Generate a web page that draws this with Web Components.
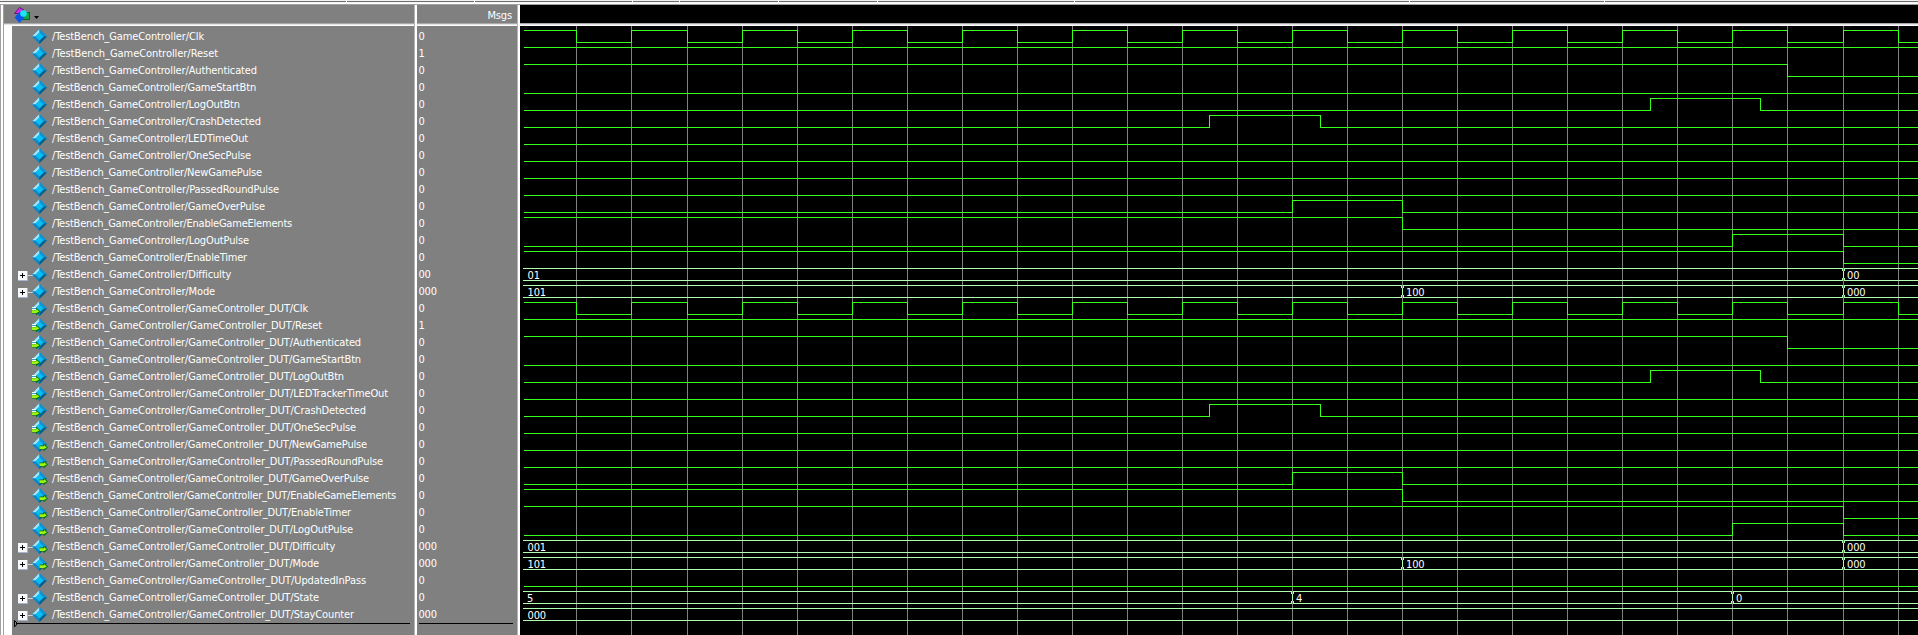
<!DOCTYPE html>
<html lang="en">
<head>
<meta charset="utf-8">
<title>Wave</title>
<style>
html,body{margin:0;height:100%;overflow:hidden;background:#fff}
</style>
</head>
<body>
<wave-window></wave-window>
<script>
const FONT = '"DejaVu Sans Condensed","DejaVu Sans",sans-serif';
const P = '/TestBench_GameController/', D = P + 'GameController_DUT/';
// Cursor ticks on the clock grid, in panel pixels.
const X0 = 520, G = k => Math.floor(576.92 + 55.048 * k);
const LO = [0], HI = [1];
const clk = [1]; for (let k = 0; k < 25; k++) clk.push([G(k), k % 2]);
const crash = [0, [1209, 1], [1320, 0]], logout = [0, [1650, 1], [1760, 0]];
const over = [0, [G(13), 1], [G(15), 0]], pulse = [0, [G(21), 1], [G(23), 0]];
const auth = [1, [G(22), 0]], elems = [1, [G(15), 0]], timer = [1, [G(23), 0]];
const mode = ['101', [G(15), '100'], [G(23), '000']];
// path, right edge of the label, value, icon kind, wave, bus
const rows = [
 [P+'Clk',204,'0','',clk],[P+'Reset',218,'1','',HI],[P+'Authenticated',257,'0','',auth],
 [P+'GameStartBtn',256,'0','',LO],[P+'LogOutBtn',240,'0','',logout],[P+'CrashDetected',261,'0','',crash],
 [P+'LEDTimeOut',248,'0','',LO],[P+'OneSecPulse',251,'0','',LO],[P+'NewGamePulse',262,'0','',LO],
 [P+'PassedRoundPulse',279,'0','',LO],[P+'GameOverPulse',265,'0','',over],[P+'EnableGameElements',292,'0','',elems],
 [P+'LogOutPulse',249,'0','',pulse],[P+'EnableTimer',247,'0','',timer],
 [P+'Difficulty',231,'00','',['01',[G(23),'00']],1],[P+'Mode',215,'000','',mode,1],
 [D+'Clk',308,'0','in',clk],[D+'Reset',322,'1','in',HI],[D+'Authenticated',361,'0','in',auth],
 [D+'GameStartBtn',361,'0','in',LO],[D+'LogOutBtn',344,'0','in',logout],[D+'LEDTrackerTimeOut',388,'0','in',LO],
 [D+'CrashDetected',366,'0','in',crash],[D+'OneSecPulse',356,'0','in',LO],[D+'NewGamePulse',367,'0','out',LO],
 [D+'PassedRoundPulse',383,'0','out',LO],[D+'GameOverPulse',369,'0','out',over],[D+'EnableGameElements',396,'0','out',elems],
 [D+'EnableTimer',351,'0','out',timer],[D+'LogOutPulse',353,'0','out',pulse],
 [D+'Difficulty',335,'000','out',['001',[G(23),'000']],1],[D+'Mode',319,'000','out',mode,1],
 [D+'UpdatedInPass',366,'0','',LO],[D+'State',319,'0','',['5',[G(13),'4'],[G(21),'0']],1],
 [D+'StayCounter',354,'000','',['000'],1]
];
const def = (name, css, render, after) => customElements.define(name, class extends HTMLElement {
  connectedCallback() {
    const root = this.attachShadow({mode: 'open'});
    root.innerHTML = `<style>${css}</style>${render(this)}`;
    if (after) after(this, root);
  }
});

def('signal-icon', ':host{display:block;width:32px;height:17px}svg{display:block;overflow:visible}', el => {
  const kind = el.getAttribute('kind'), bus = el.hasAttribute('bus');
  const ax = kind === 'in' ? 15 : 22.500;
  return `<svg width="32" height="17" viewBox="0 0 32 17">
  ${bus ? `<path d="M10 10.500H16" stroke="#d0d4dc"/><rect x="1" y="6" width="10" height="10" fill="#a9b3cc"/><rect x="1" y="6" width="9" height="9" fill="#f7f8fc"/><path d="M3 10.500H8M5.500 8V13" stroke="#000" shape-rendering="crispEdges"/>` : ''}
  <path d="M22.500 2L30 9.500L22.500 17L15 9.500Z" fill="#0a84bd"/>
  <path d="M22.500 2V5.500L18.500 9.500H15Z" fill="#a5e6fa"/><path d="M22.500 2L30 9.500H26.500L22.500 5.500Z" fill="#0c95d6"/>
  <path d="M15 9.500H18.500L22.500 13.500V17Z" fill="#1087c4"/><path d="M30 9.500H26.500L22.500 13.500V17Z" fill="#075f85"/>
  <path d="M22.500 5.500L26.500 9.500L22.500 13.500L18.500 9.500Z" fill="#08bff5"/>
  ${kind ? `<path d="M${ax} 10.500H${ax+4}V8.500L${ax+8.500} 12.500L${ax+4} 16.500V14.500H${ax}Z" fill="#0c6f14"/><path d="M${ax} 11.300H${ax+4.5}V10L${ax+7.300} 12.500L${ax+4.5} 14H${ax}Z" fill="#9af511"/>` : ''}
  ${kind === 'in' ? `<path d="M15 8.500H19M15 10.500H19" stroke="#f4fbff"/>` : ''}
  </svg>`;
});

def('signal-name', `:host{display:flex;height:17px;padding-left:5px;color:#fff;font:11px/19px ${FONT};font-stretch:condensed;white-space:pre}
span{margin-left:3px;height:17px}`, el =>
  `<signal-icon kind="${el.getAttribute('kind')}" ${el.hasAttribute('bus') ? 'bus' : ''}></signal-icon><span><slot></slot></span>`,
  (el, root) => {
    const s = root.querySelector('span'), n = el.textContent.length;
    const want = +el.getAttribute('end') - 52;
    s.style.letterSpacing = (want - s.getBoundingClientRect().width) / n + 'px';
  });

def('signal-value', `:host{display:block;height:17px;padding-left:1.5px;color:#fff;font:11px/19px ${FONT};font-stretch:condensed;letter-spacing:-.2px}`, () => '<slot></slot>');

def('signal-wave', `:host{display:block;height:17px}svg{display:block}text{font:11px ${FONT};font-stretch:condensed;fill:#fff;letter-spacing:-.15px}`, el => {
  const [,,,, w, bus] = rows[el.getAttribute('row')];
  let o = '';
  const box = (x, y, a, b, c) => o += `<rect x="${x}" y="${y}" width="${a}" height="${b}" fill="${c}"/>`;
  if (bus) {
    const c = '#b0ffb0';
    box(3, 3, 1395, 1, c); box(3, 15, 1395, 1, c);
    o += `<text x="${w[0].length > 1 ? 7.5 : 7}" y="14">${w[0]}</text>`;
    w.slice(1).forEach(([x, t]) => {
      x -= X0;
      box(x, 6, 1, 7, c);
      box(x-1, 3, 1, 3, c); box(x+1, 3, 1, 3, c); box(x-1, 13, 1, 3, c); box(x+1, 13, 1, 3, c);
      box(x, 3, 1, 3, '#808080'); box(x, 13, 1, 3, '#808080');
      o += `<text x="${x+4}" y="14">${t}</text>`;
    });
  } else {
    let x = 4, v = w[0];
    [...w.slice(1), [1918, null]].forEach(([nx, nv]) => {
      nx -= X0;
      box(x, v ? 3 : 15, nx - x + (nv === null ? 0 : 1), 1, '#38ff1c');
      if (nv !== null) box(nx, 3, 1, 13, '#38ff1c');
      x = nx; v = nv;
    });
  }
  return `<svg width="1398" height="17" shape-rendering="crispEdges">${o}</svg>`;
});

def('wave-grid', ':host{display:block;position:absolute;inset:0}svg{display:block}', () => {
  let d = ''; for (let k = 0; k < 25; k++) d += `M${G(k) - X0 + .5} 0V609`;
  return `<svg width="1398" height="609" shape-rendering="crispEdges"><path d="${d}" stroke="#808080"/></svg>`;
});

def('wave-column', `:host{display:flex;flex-direction:column;box-sizing:border-box;height:630px;background:var(--bg,#808080)}
header{height:18px;flex:none;color:#fff;font:11px/21px ${FONT};font-stretch:condensed;text-align:right;box-sizing:border-box;padding-right:5px;letter-spacing:-.15px}
.rule{height:3px;flex:none;background:linear-gradient(#a8a8a8 1px,#e4e4e8 1px 2px,#fff 2px)}
.body{flex:1;position:relative;box-sizing:border-box;padding-top:1px;background:var(--bg,#808080);margin-left:var(--gutter,0);}
:host([names]){background:linear-gradient(#808080 20px,#fff 20px)}
:host([names]) header{text-align:left}
::slotted(*){position:relative}
::slotted(wave-grid){position:absolute}`,
 () => '<header><slot name="head"></slot></header><div class="rule"></div><div class="body"><slot></slot></div>');

def('drop-marker', ':host{display:block;height:7px}svg{display:block}', el => {
  const n = el.hasAttribute('arrow');
  return n ? '<svg width="400" height="8"><path d="M2.500 .5V7L5.500 3.500Z" fill="none" stroke="#000"/><path d="M4 3.500H398" stroke="#000" shape-rendering="crispEdges"/></svg>'
           : '<svg width="98" height="8"><path d="M2 3.500H96" stroke="#000" shape-rendering="crispEdges"/></svg>';
});

def('tool-icon', ':host{display:block;padding:2px 0 0 9px}svg{display:block}', () =>
 `<svg width="28" height="16" viewBox="0 0 28 16"><rect x="9.500" y="5.500" width="7" height="7" fill="#18a645" stroke="#066b29"/>
 <path d="M6.500 .5L11 3L6.500 6.500H1.500Z" fill="#d12be8" stroke="#70108a"/><path d="M6.500 5L11.500 10.500L6.500 16L1.500 10.500Z" fill="#0b56e8"/>
 <circle cx="10.500" cy="6.500" r="3.300" fill="#19e3f6"/><path d="M21 9H26L23.500 12Z" fill="#000"/></svg>`);

def('wave-window', `:host{display:block;width:1918px;height:635px;overflow:hidden;background:#fff}
.top{height:5px;background:linear-gradient(#f0f0f0 1px,#6e6e6e 1px 2px,#f4f4f4 2px 3px,#fff 3px 4px,#a0a0a0 4px)}
.top svg{display:block}
.main{display:flex;height:630px}
.edge{width:4px;background:linear-gradient(90deg,#a0a0a0 1px,#fff 1px 3px,#a0a0a0 3px)}
.names{width:410px;--gutter:8px}.vals{width:100px}.waves{width:1398px;--bg:#000}
.sep{width:3px;background:linear-gradient(90deg,#b4b4b4 1px,#fff 1px)}`, () =>
`<div class="top"><svg width="1918" height="3" shape-rendering="crispEdges"><path d="M346.500 0V3M474.500 0V3M632.500 0V3M679.500 0V3M778.500 0V3M877.500 0V3M1074.500 0V3M1409.500 0V3M1604.500 0V3" stroke="#fff"/></svg></div>
<div class="main"><div class="edge"></div>
<wave-column class="names" names><tool-icon slot="head"></tool-icon>${rows.map(r => `<signal-name kind="${r[3]}" end="${r[1]}" ${r[5] ? 'bus' : ''}>${r[0]}</signal-name>`).join('')}<drop-marker arrow style="margin-top:-2px"></drop-marker></wave-column>
<div class="sep"></div>
<wave-column class="vals"><span slot="head">Msgs</span>${rows.map(r => `<signal-value>${r[2]}</signal-value>`).join('')}<drop-marker style="margin-top:-2px"></drop-marker></wave-column>
<div class="sep"></div>
<wave-column class="waves"><wave-grid></wave-grid>${rows.map((r, i) => `<signal-wave row="${i}"></signal-wave>`).join('')}</wave-column></div>`);
</script>
</body>
</html>
